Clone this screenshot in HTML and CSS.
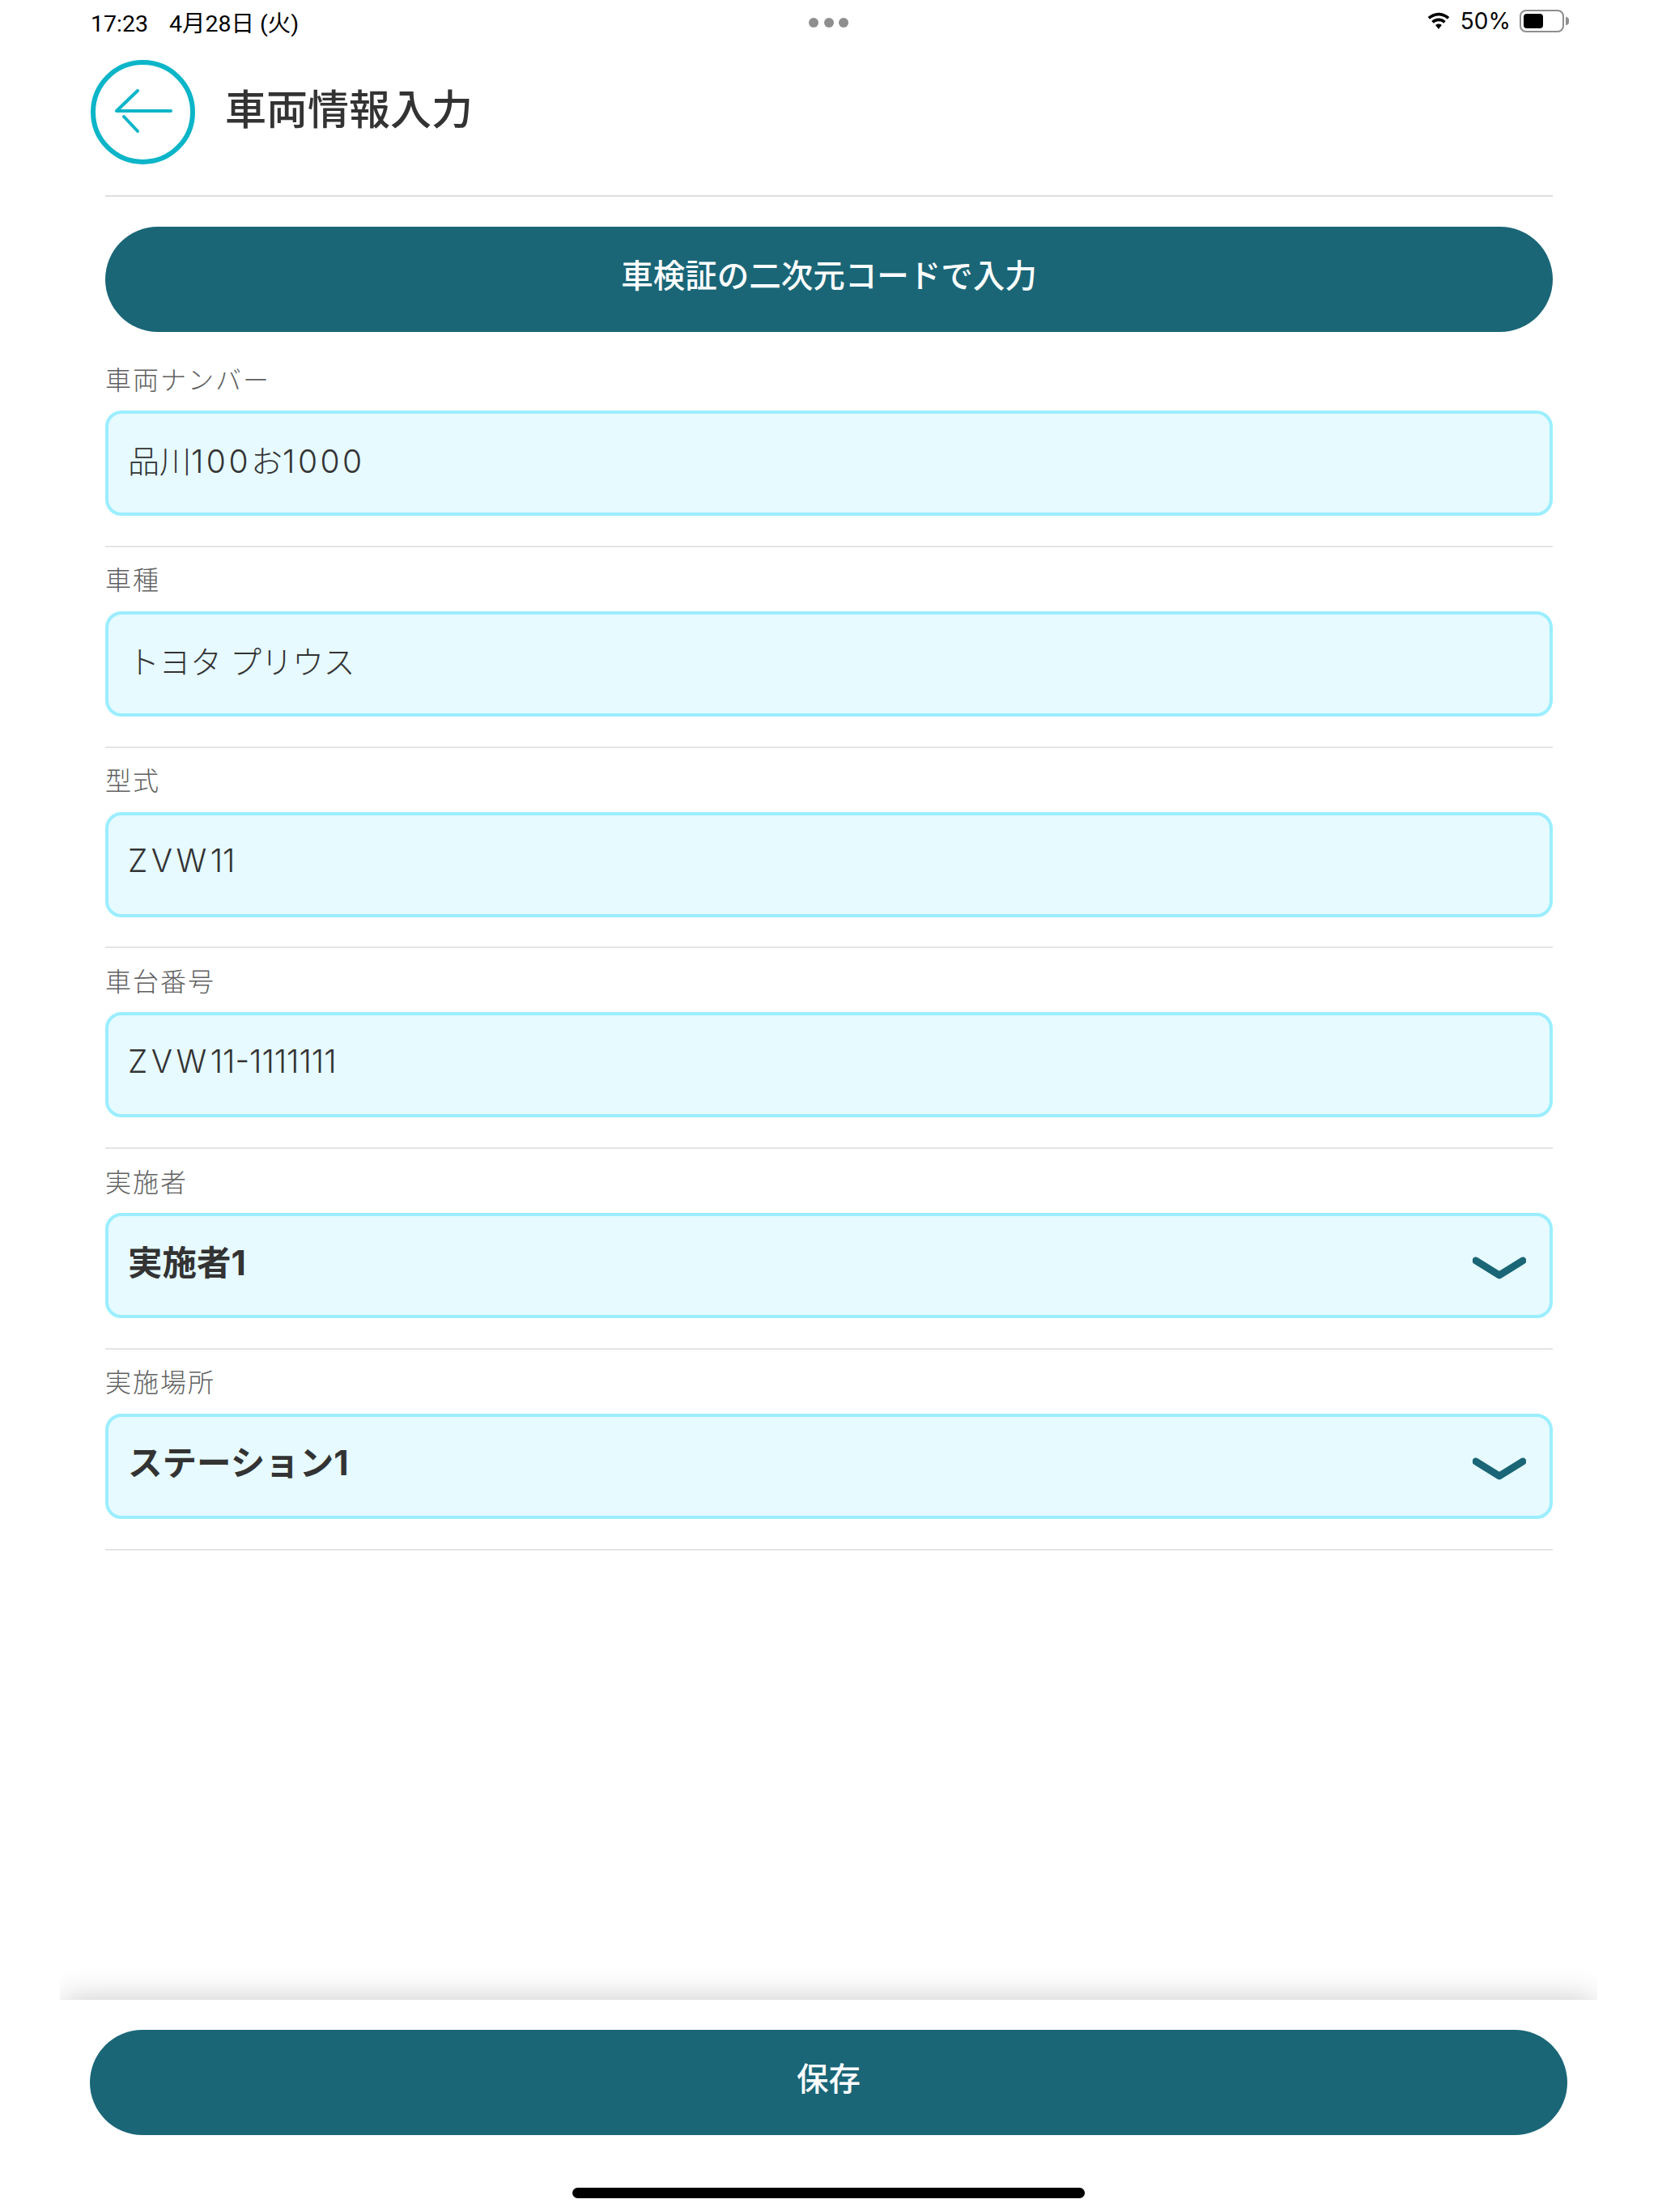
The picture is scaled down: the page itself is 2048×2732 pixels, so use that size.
FILE: index.html
```html
<!DOCTYPE html>
<html lang="ja">
<head>
<meta charset="utf-8">
<title>車両情報入力</title>
<link rel="stylesheet" href="styles.css">
</head>
<body>
<div class="screen">
  <div class="status">
    <span class="status-left">17:23<span class="date">4月28日 (火)</span></span>
    <div class="dots"><i></i><i></i><i></i></div>
    <div class="status-right">
      <svg class="wifi" viewBox="0 0 32 24"><path d="M16 5.500c4.200 0 8 1.600 10.900 4.300l2.400-2.700C25.800 3.800 21.100 1.700 16 1.700S6.200 3.800 2.700 7.100l2.400 2.700C8 7.100 11.800 5.500 16 5.500zM16 12.300c2.400 0 4.500.9 6.200 2.400l2.500-2.700C22.400 9.900 19.300 8.500 16 8.500s-6.400 1.400-8.700 3.500l2.500 2.700c1.700-1.500 3.800-2.400 6.200-2.400zM16 15.400c-1.500 0-2.800.6-3.900 1.500l3.900 5 3.900-5c-1.100-.9-2.400-1.500-3.900-1.500z"/></svg>
      <span class="pct">50%</span>
      <div class="battery"><div class="level"></div></div>
      <div class="nub"></div>
    </div>
  </div>

  <header class="head">
    <div class="back">
      <svg viewBox="0 0 117 117"><path d="M26 57h67M52 32 26 57M35 64 52 82" fill="none" stroke="#0DB5C8" stroke-width="4" stroke-linecap="round"/></svg>
    </div>
    <h1>車両情報入力</h1>
  </header>

  <main class="form">
    <button class="pill scan">車検証の二次元コードで入力</button>
    <section class="field"><label>車両ナンバー</label><div class="box"><span>品川<span class="digits">100</span>お<span class="digits">1000</span></span></div></section>
    <section class="field"><label>車種</label><div class="box"><span class="kana">トヨタ プリウス</span></div></section>
    <section class="field"><label>型式</label><div class="box"><span><span class="caps">ZVW</span>11</span></div></section>
    <section class="field"><label>車台番号</label><div class="box"><span><span class="caps">ZVW</span>11-1111111</span></div></section>
    <section class="field"><label>実施者</label><div class="box select">実施者1<svg viewBox="0 0 66 28"><path d="M4 5 33 23 62 5" fill="none" stroke="#1A6677" stroke-width="9" stroke-linecap="round" stroke-linejoin="round"/></svg></div></section>
    <section class="field"><label>実施場所</label><div class="box select">ステーション1<svg viewBox="0 0 66 28"><path d="M4 5 33 23 62 5" fill="none" stroke="#1A6677" stroke-width="9" stroke-linecap="round" stroke-linejoin="round"/></svg></div></section>
  </main>

  <footer class="foot">
    <div class="shade"></div>
    <button class="pill save">保存</button>
    <div class="home"></div>
  </footer>
</div>
</body>
</html>
```
FILE: styles.css
```css
* { box-sizing: border-box; }
html, body { margin: 0; padding: 0; background: #fff; }
body { font-family: "Inter", "Noto Sans CJK JP", sans-serif; color: #333; }
.screen { width: 2048px; height: 2732px; display: flex; flex-direction: column; overflow: hidden; }

.status { height: 54px; flex: none; padding: 0 110px 2px 112px; display: flex; align-items: center; justify-content: space-between; font-family: "Roboto", "Noto Sans CJK JP", sans-serif; font-size: 28.500px; color: #000; position: relative; }
.date { margin-left: 26px; }
.dots { display: flex; gap: 6.500px; position: absolute; left: 999px; top: 22px; }
.dots i { width: 12px; height: 12px; border-radius: 50%; background: #8e8e8e; }
.status-right { display: flex; align-items: center; }
.wifi { width: 32px; height: 24px; margin-right: 11px; fill: #000; }
.pct { margin-right: 11px; font-family: "Inter", sans-serif; font-size: 28px; }
.battery { width: 55px; height: 28px; border: 2px solid #8e8e8e; border-radius: 8px; padding: 3px; }
.level { width: 24px; height: 100%; border-radius: 4px; background: #000; }
.nub { width: 4px; height: 10px; margin-left: 2px; background: #8e8e8e; border-radius: 0 4px 4px 0; }

.head { height: 167px; flex: none; margin: 20px 130px 0 112px; display: flex; align-items: flex-start; }
.back { width: 129px; height: 129px; border: 6px solid #0DB5C8; border-radius: 50%; flex: none; }
.back svg { display: block; width: 117px; height: 117px; }
.head h1 { margin: 33px 0 0 37px; font-size: 51px; font-weight: 500; line-height: 1; color: #333; font-family: "Noto Sans CJK JP", sans-serif; }

.form { margin: 0 130px; border-top: 2px solid #dedede; padding-top: 37px; flex: 1; }
.pill { display: block; border: 0; background: #1A6677; color: #fff; font-family: "Noto Sans CJK JP", sans-serif; font-weight: 500; font-size: 39.500px; height: 130px; border-radius: 65px; padding: 0 0 16px; }
.scan { width: 100%; margin-bottom: 18px; }

.field { height: 247.800px; padding-top: 18.500px; border-bottom: 2px solid #e4e4e8; }
.field label { display: block; font-size: 32px; line-height: 40px; letter-spacing: 2px; color: #606060; height: 60.500px; font-family: "Noto Sans CJK JP", sans-serif; font-weight: 300; }
.box { height: 130px; border: 4px solid #9BEEFF; border-radius: 20px; background: #E6FAFF; padding: 0 26px 10px 24px; display: flex; align-items: center; justify-content: space-between; font-size: 39px; color: #333; font-weight: 300; }
.digits { letter-spacing: 3.500px; }
.caps { letter-spacing: 4.500px; }
.kana { letter-spacing: -0.500px; }
.select { font-weight: 700; font-size: 42.500px; padding-bottom: 14px; }
.select svg { width: 66px; height: 28px; margin-right: 3px; margin-top: 20px; flex: none; }

.foot { height: 262px; flex: none; position: relative; padding-top: 37px; }
.shade { position: absolute; left: 74px; width: 1899px; top: -44px; height: 44px; overflow: hidden; }
.shade::after { content: ""; position: absolute; left: 4px; right: 4px; top: 44px; height: 100px; box-shadow: 0 0 40px rgba(0,0,0,.22); }
.save { width: 1825px; margin-left: 111px; }
.home { width: 633px; height: 13px; border-radius: 7px; background: #000; margin: 65px 0 0 707px; }
```
